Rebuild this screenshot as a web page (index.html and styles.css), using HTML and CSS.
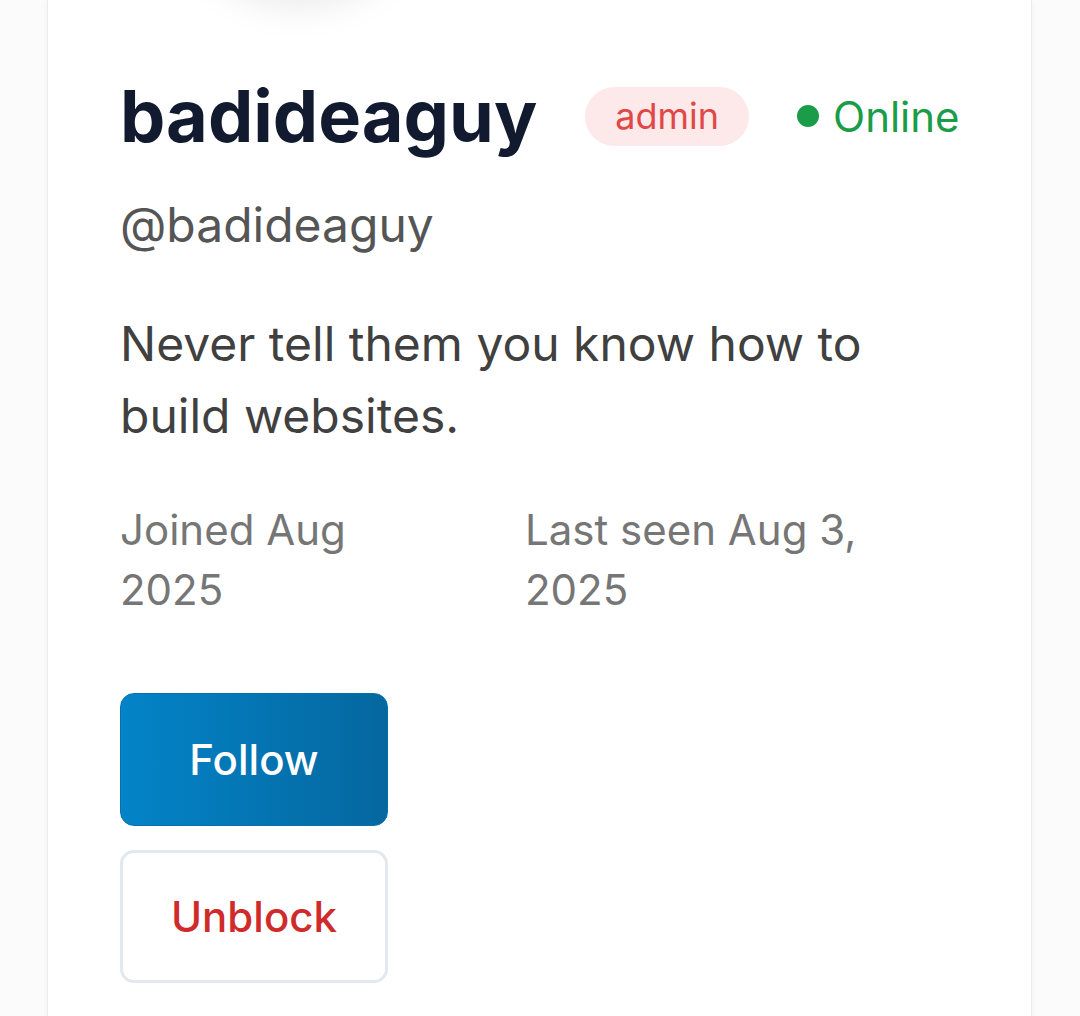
FILE: index.html
```html
<!DOCTYPE html>
<html lang="en">
  <head>
    <meta charset="UTF-8" />
    <meta name="viewport" content="width=device-width, initial-scale=1.0" />
    <title>badideaguy</title>
    <link rel="stylesheet" href="styles.css">
  </head>
  <body>
    <div class="card">
      <div class="avatar"></div>

      <div class="name-row">
        <h1 class="name">badideaguy</h1>
        <span class="badge">admin</span>
        <span class="status"><span class="dot"></span>Online</span>
      </div>

      <div class="handle">@badideaguy</div>

      <p class="bio">Never tell them you know how to build websites.</p>

      <div class="meta">
        <div>Joined Aug 2025</div>
        <div>Last seen Aug 3, 2025</div>
      </div>

      <div class="actions">
        <button class="btn btn-follow">Follow</button>
        <button class="btn btn-unblock">Unblock</button>
      </div>
    </div>
  </body>
</html>
```

FILE: styles.css
```css
* {
  margin: 0;
  padding: 0;
  box-sizing: border-box;
}

body {
  background: #fbfbfb;
  font-family: "Inter", "Roboto", sans-serif;
  overflow: hidden;
}

.card {
  margin: 0 48px 0 47px;
  padding: 1px 72px 60px;
  background: #fff;
  border-left: 1px solid #ececec;
  border-right: 1px solid #ececec;
  box-shadow: 0 0 6px rgba(0, 0, 0, 0.04);
  min-height: 1100px;
}

.avatar {
  width: 250px;
  height: 250px;
  margin: -258px 0 0 54px;
  border-radius: 50%;
  background: #fff;
  box-shadow: 0 10px 40px rgba(0, 0, 0, 0.1);
}

.name-row {
  display: flex;
  align-items: center;
  gap: 48px;
  margin-top: 80px;
}

.name {
  font-size: 72px;
  font-weight: 700;
  line-height: 1.2;
  color: #111a2e;
}

.badge {
  font-size: 36px;
  color: #e04848;
  background: #fde9e9;
  height: 59px;
  line-height: 59px;
  padding: 0 30px;
  border-radius: 30px;
}

.status {
  display: flex;
  align-items: center;
  gap: 14px;
  font-size: 42px;
  color: #1a9c48;
}

.dot {
  width: 22px;
  height: 22px;
  border-radius: 50%;
  background: #1a9c48;
}

.handle {
  margin-top: 37px;
  font-size: 48px;
  line-height: 58px;
  color: #555;
}

.bio {
  margin-top: 54px;
  font-size: 48px;
  line-height: 72px;
  color: #404040;
}

.meta {
  display: grid;
  grid-template-columns: 300px 350px;
  column-gap: 105px;
  margin-top: 48px;
  font-size: 42px;
  line-height: 60px;
  color: #767676;
}

.actions {
  display: flex;
  flex-direction: column;
  align-items: flex-start;
  gap: 24px;
  margin-top: 73px;
}

.btn {
  width: 268px;
  height: 133px;
  border-radius: 14px;
  font-family: "Inter", sans-serif;
  font-size: 42px;
  font-weight: 500;
  cursor: pointer;
}

.btn-follow {
  background: linear-gradient(to right, #0384c8, #05679f);
  border: 1px solid #0572ad;
  color: #fff;
}

.btn-unblock {
  background: #fff;
  border: 3px solid #e3e8ef;
  color: #cf2b2b;
}
```
